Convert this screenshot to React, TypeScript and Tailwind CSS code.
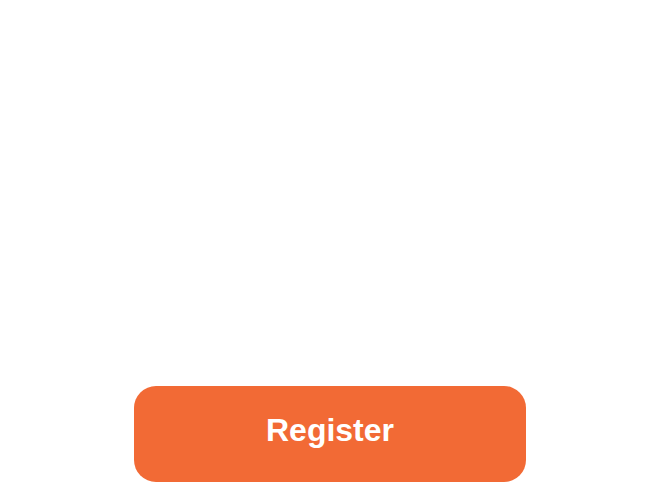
import React from 'react';

const App: React.FC = () => {
  return (
    <div className="min-h-screen bg-white flex flex-col justify-end items-center" style={{ fontFamily: '"Liberation Sans", Arial, sans-serif' }}>
      <button className="w-[392px] h-[96px] pb-[9px] rounded-[22px] bg-[#f26a35] text-white text-[32px] font-bold leading-none">
        Register
      </button>
    </div>
  );
};

export default App;
